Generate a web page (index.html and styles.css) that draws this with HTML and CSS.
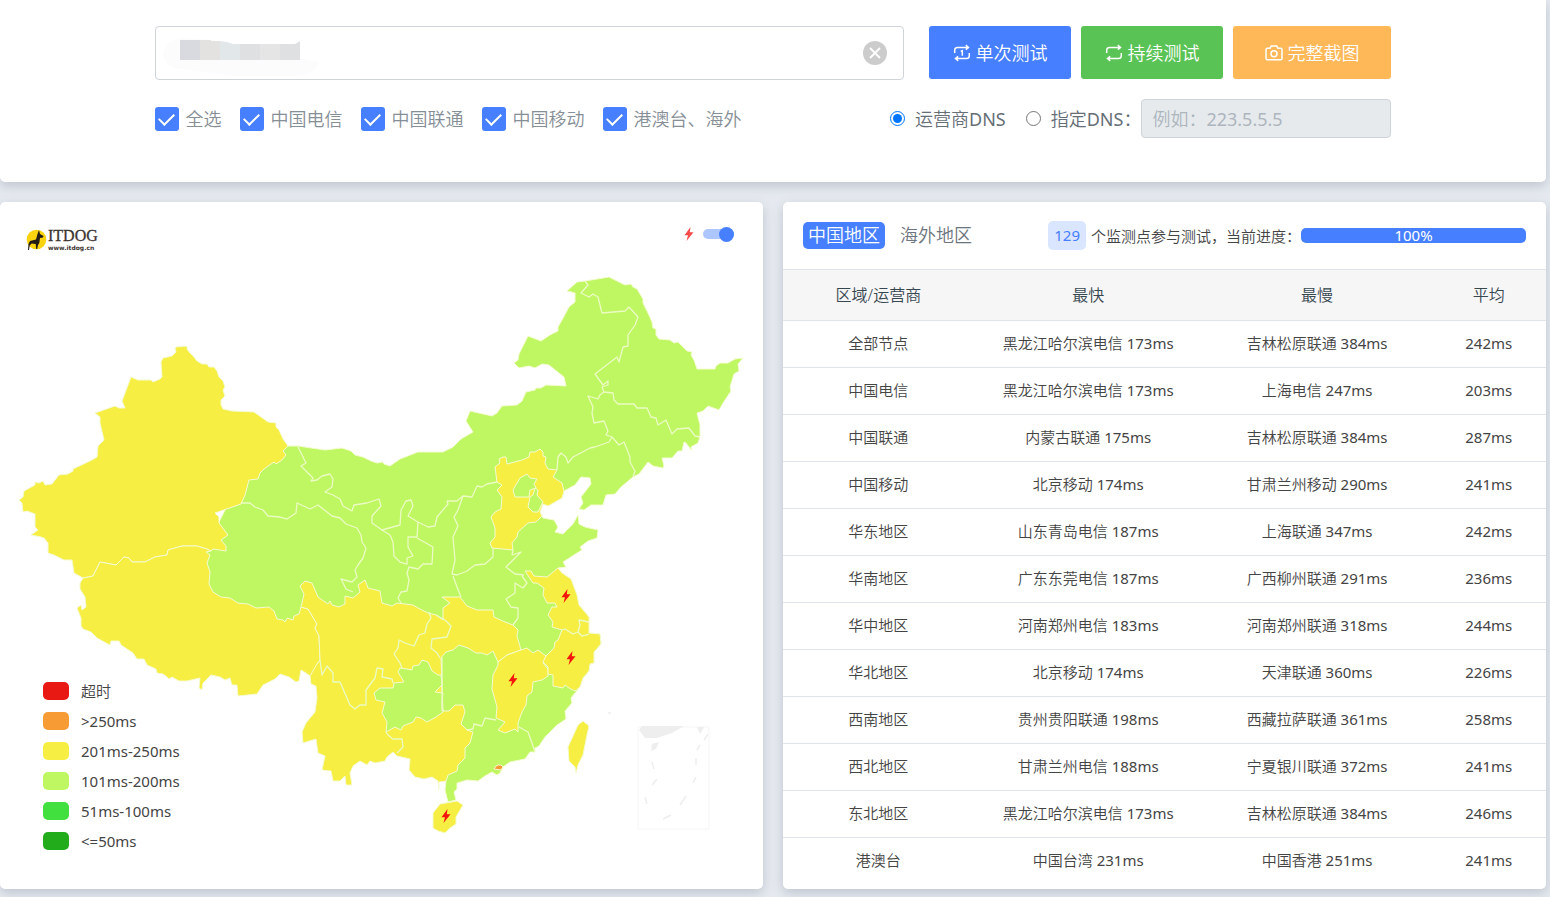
FILE: index.html
```
<!DOCTYPE html>
<html lang="zh-CN">
<head>
<meta charset="utf-8">
<title>ITDOG Ping</title>
<link rel="stylesheet" href="styles.css">
</head>
<body>
<section class="card search">
  <form class="search-row">
    <div class="host">
      <input class="host-input" type="text" aria-label="测试地址">
      <svg class="host-mask" width="160" height="42" viewBox="0 0 160 42" aria-hidden="true">
        <path fill="#fcfcfc" d="M0 20q2-14 20-16l30 2 106 22q-4 12-20 14H70L10 34Q1 30 0 20z"/>
        <path fill="#d8dadf" d="M17 6h20v20H17z"/><path fill="#e3e2e1" d="M37 6h11v1h9v19H37z"/><path fill="#e2e7ea" d="M57 7l7 1 6 2h7v16H57z"/><path fill="#dee0e2" d="M77 10h20v16H77z"/><path fill="#e5e5e5" d="M97 10h20v16H97z"/><path fill="#dee0e2" d="M117 10h15l5-3v19h-20z"/>
      </svg>
      <button class="clear" type="button" aria-label="清除">
        <svg width="24" height="24" viewBox="0 0 24 24"><ellipse cx="12" cy="12" rx="12" ry="12" fill="#ccc"/><path d="M7 7l10 10M17 7L7 17" stroke="#fff" stroke-width="1.8"/></svg>
      </button>
    </div>
    <div class="actions">
      <button class="btn btn-blue" type="button">
        <svg width="18" height="18" viewBox="0 0 18 18" class="ico"><path d="M1.700 9V6.200Q1.700 3.400 4.500 3.400H15M12.800 1.200L15.500 3.400L12.800 5.600M16.300 9v2.800q0 2.800-2.800 2.800H3M5.200 12.400L2.500 14.600L5.200 16.800M7.700 7.400L9.300 6.600V11.800"/></svg>单次测试</button>
      <button class="btn btn-green" type="button">
        <svg width="18" height="18" viewBox="0 0 18 18" class="ico"><path d="M1.700 9V6.200Q1.700 3.400 4.500 3.400H15M12.800 1.200L15.500 3.400L12.800 5.600M16.300 9v2.800q0 2.800-2.800 2.800H3M5.200 12.400L2.500 14.600L5.200 16.800"/></svg>持续测试</button>
      <button class="btn btn-orange" type="button">
        <svg width="18" height="18" viewBox="0 0 18 18" class="ico"><path d="M2.200 4.200H5L6.300 2h5.400L13 4.200h2.800q1.200 0 1.200 1.200v9q0 1.300-1.200 1.300H2.200Q1 15.700 1 14.400v-9Q1 4.200 2.200 4.200z"/><circle cx="9" cy="9.700" r="3"/></svg>完整截图</button>
    </div>
  </form>
  <div class="options">
    <div class="checks">
      <label class="check"><input type="checkbox" checked><span>全选</span></label>
      <label class="check"><input type="checkbox" checked><span>中国电信</span></label>
      <label class="check"><input type="checkbox" checked><span>中国联通</span></label>
      <label class="check"><input type="checkbox" checked><span>中国移动</span></label>
      <label class="check"><input type="checkbox" checked><span>港澳台、海外</span></label>
    </div>
    <div class="dns">
      <label class="radio"><input type="radio" name="dns" checked><span>运营商DNS</span></label>
      <label class="radio"><input type="radio" name="dns"><span>指定DNS：</span></label>
      <input class="dns-input" type="text" placeholder="例如：223.5.5.5" aria-label="指定DNS" disabled>
    </div>
  </div>
</section>

<main class="panels">
  <section class="card map-card">
    <svg class="map" viewBox="0 202 763 687" role="img" aria-label="中国地图">
      <defs><path id="bolt" d="M1.500-7L-4.500 1.200H-1L-2.500 7L4.500-1.800H.8z"/></defs>
      <g class="area">
        <path class="lime" d="M288 446L298 446 325 450 342 448 351 451 355 455 363 457 371 461 377 463 383 462 384 464 390 466 400 459 418 452 443 452 453 447 461 439 473 432 466 421 470 411 492 416 497 413 502 406 517 405 522 401 526 392 535 390 536 388 541 388 546 385 566 386 564 377 549 365 542 364 535 368 529 366 519 368 514 363 518 360 519 354 528 336 541 341 550 335 558 331 558 327 562 320 569 307 575 302 575 293 567 291 577 282 585 281 609 277 625 285 631 284 633 287 637 289 643 299 643 303 648 313 652 322 653 328 656 329 656 335 659 339 670 340 674 343 678 342 687 351 692 352 691 355 694 360 697 369 715 369 716 366 720 363 728 363 735 359 743 358 738 364 739 371 734 374 730 387 731 391 723 403 719 410 708 406 703 411 697 413 700 425 700 437 698 443 691 447 692 451 686 443 684 442 682 451 678 451 672 458 662 458 664 466 663 468 653 466 648 462 639 474 633 477 621 487 615 494 606 495 603 505 591 505 584 510 579 509 583 503 581 497 591 484 590 478 581 477 575 485 564 491 562 498 548 506 543 504 540 512 542 516 543 518 554 520 558 527 555 532 563 534 573 524 578 515 579 524 585 527 598 530 597 538 588 541 580 547 582 550 577 553 563 562 566 567 558 568 562 573 571 579 577 595 579 605 589 617 589 633 600 634 601 644 594 652 594 663 590 664 589 671 583 678 580 687 575 693 571 698 572 703 565 711 566 719 557 725 545 737 539 746 535 748 535 752 530 752 525 759 510 762 503 767 500 773 497 775 492 772 485 776 478 781 467 780 457 783 457 789 454 792 456 800 448 802 445 790 446 781 430 770 330 700 305 660 250 640 200 590 200 560 230 500 270 450z"/>
        <path class="yellow" d="M176 347L187 346 187 349 190 353 194 357 197 361 202 364 207 364 209 367 214 367 217 371 219 377 223 381 225 387 223 390 225 396 221 400 221 405 223 409 232 411 254 412 268 422 276 423 276 427 279 430 283 439 288 446 283 451 286 455 282 460 276 464 274 462 264 469 260 473 258 479 249 480 245 495 241 504 215 513 219 517 219 523 228 535 221 540 226 546 226 551 213 549 211 551 207 549 197 546 182 546 168 550 167 555 155 557 145 562 132 562 129 558 124 557 116 565 100 562 93 576 83 578 74 573 72 560 64 560 54 555 48 553 48 543 44 538 41 537 31 535 38 530 35 527 35 514 27 511 23 512 22 503 19 500 23 497 24 491 35 485 35 482 39 483 43 481 45 485 52 484 59 475 68 474 73 471 73 469 92 460 97 457 98 446 101 443 104 440 100 423 100 417 95 413 115 406 119 408 125 408 122 401 131 377 138 380 151 380 153 382 160 379 162 377 161 362 163 358 172 356 176 352 175 348z"/>
        <path class="yellow" d="M83 578L93 576 100 562 116 565 124 557 129 558 132 562 145 562 155 557 167 555 168 550 182 546 197 546 207 549 211 551 206 552 210 555 207 563 210 572 209 584 213 592 221 597 230 598 238 603 248 604 256 608 269 607 274 611 277 619 283 620 285 622 287 618 293 620 294 616 299 614 301 607 308 609 317 624 315 628 319 636 320 660 317 664 315 673 310 676 306 673 301 670 299 681 296 682 289 677 280 674 275 679 263 685 257 694 238 696 237 685 232 685 230 678 225 680 220 677 211 675 203 683 202 690 199 688 200 678 187 681 179 681 172 677 169 679 167 677 163 674 157 673 156 669 147 665 144 659 137 659 133 653 121 645 119 641 111 641 110 645 97 638 91 632 83 629 81 626 81 618 77 608 81 605 82 610 86 607 85 597 80 589 80 583z"/>
        <path class="yellow" d="M301 607L304 594 300 586 305 581 312 583 318 597 328 604 330 601 332 605 339 607 345 604 345 596 353 598 360 592 358 585 365 580 368 588 380 591 382 603 392 606 397 603 413 605 418 608 428 613 436 615 443 620 443 608 450 603 442 597 460 597 467 606 477 610 493 610 494 617 505 622 513 625 518 630 517 636 521 650 507 655 498 662 493 651 487 655 482 653 476 653 468 648 459 645 453 650 446 652 441 658 442 685 443 711 449 711 455 705 463 705 465 712 461 724 467 730 473 732 470 743 465 748 465 758 458 765 457 771 448 775 446 781 439 782 439 789 438 781 432 777 424 779 415 777 409 770 410 759 397 756 393 752 387 757 385 761 375 763 370 761 367 765 360 761 353 766 350 773 352 785 346 785 345 776 340 781 333 781 331 771 322 770 325 756 318 753 316 739 303 743 302 732 306 723 315 712 317 698 316 686 311 684 310 676 317 664 320 660 319 636 315 628 317 624 308 609z"/>
        <path class="lime" d="M422 660L428 662 432 671 438 675 441 675 442 685 435 692 443 693 442 702 443 712 436 717 427 722 421 718 416 717 413 722 403 726 401 730 395 727 386 732 387 722 382 713 385 702 376 700 374 693 380 688 393 688 394 683 404 682 398 672 400 668 407 669 412 670 413 666 419 665z"/>
        <path class="yellow" d="M498 662L507 655 521 650 527 648 533 653 538 650 546 656 543 663 548 669 548 676 542 680 533 682 532 692 527 696 526 705 522 712 518 723 518 732 515 729 505 733 498 730 505 722 496 718 497 707 492 689 493 675 498 665z"/>
        <path class="yellow" d="M525 571L531 571 534 576 547 577 553 572 558 568 562 573 571 579 577 595 579 605 589 617 589 633 600 634 601 644 594 652 594 663 590 664 589 671 583 678 580 687 575 691 569 688 565 685 563 688 553 686 553 675 548 674 548 667 543 662 546 656 554 648 555 642 558 640 562 630 552 627 553 622 548 615 552 607 557 607 555 603 547 603 543 595 544 588 537 583 533 583z"/>
        <path class="yellow" d="M497 482L495 467 500 463 499 459 503 457 506 457 507 464 522 460 529 457 530 452 535 452 540 449 543 452 543 456 546 457 545 463 548 469 557 470 553 477 562 483 564 491 562 498 548 506 543 504 540 512 542 516 536 522 528 523 518 532 517 537 512 543 513 550 492 548 490 543 495 537 495 528 491 517 495 512 501 509 502 497 497 490 502 485z"/>
        <path class="lime" d="M513 490L517 483 520 478 527 474 530 478 537 479 534 484 536 488 530 490 529 497 515 497z"/>
        <path class="lime" d="M535 488L538 490 537 495 543 502 538 512 533 512 528 507 530 497 533 495z"/>
        <path class="yellow" d="M583 721L589 726 587 735 583 755 578 765 576 773 575 767 569 761 568 747 578 725z"/>
        <path class="yellow" d="M440 804L457 801 463 805 456 817 456 824 450 828 445 833 438 831 433 828 433 813z"/>
        <path class="orange" d="M494 769L496 766 498 765 501 765 503 767 501 770z"/>
      </g>
      <g class="line">
        <path d="M298 447L306 463 301 466 313 478 311 481 317 480 322 476 330 474 333 479 332 487 325 492 333 495 340 499 343 506 352 511 354 505 367 503 379 499 381 506 372 516 372 523 382 530 400 525 401 510 406 501 411 500 413 506 408 516 418 522 428 527 435 526 437 517 448 504 447 501 457 501 463 496 472 497 477 486 482 487 487 484 497 482"/>
        <path d="M418 522L417 537 408 537 408 547 413 556 407 558 407 564 400 562 394 556 393 542 390 535 382 530M417 538L433 547 432 564 423 564 418 569 409 567 407 573 409 580 407 591 401 592 398 598 401 603"/>
        <path d="M463 496L458 510 454 517 458 526 453 537 455 560 452 574 457 575 467 571 475 565 485 564 493 557 493 548M453 576L457 587 461 597M513 550L512 555 521 552 506 567 515 574 524 575M522 576L527 583 523 588 515 583 515 593 506 599 511 607 518 608 518 618 513 625"/>
        <path d="M241 503L250 503 255 507 263 510 268 516 280 517 287 519 296 513 297 503 310 509 318 505 332 516 340 518 346 524 357 528 361 535 362 542 366 548 363 558 358 565 355 570 357 577 352 582 341 579 346 589 353 592"/>
        <path d="M585 281L588 285 581 293 589 297 593 294 598 297 602 313 625 311 629 307 638 317 635 325 628 335 628 346 623 347 619 362 617 357 595 374 603 385 608 381 608 385 602 387 604 392 613 393 614 400 618 404 634 404 637 408 647 408 651 417 656 418 658 425 666 420 672 434 677 429 689 428 695 436 700 437"/>
        <path d="M604 392L600 395 598 399 588 396 593 407 592 413 594 423 604 421 608 431 606 435 612 437 609 442 595 447 590 448 573 457 568 463 566 457 561 453 558 457 557 470M612 437L619 445 624 442 630 457 630 462 635 471 633 477"/>
        <path d="M467 730L473 729 474 724 482 726 485 718 496 720M519 727L528 732 532 743 535 752M442 658L442 711"/>
        <path d="M320 660L322 675 327 666 333 673 333 682 340 682 350 705 355 709 360 705 366 705 366 690 375 678 377 668 383 669 382 677 392 679 393 683M386 732L388 735 393 739 402 739 403 747 397 753"/>
        <path d="M429 612L431 618 427 624 425 633 419 635 414 646 405 643 399 640 398 648 394 654 400 663 402 668M436 615L445 620 451 626 447 637 432 639 431 648 437 653 440 658M562 630L565 629 573 634 578 632 582 636 589 634M578 632L580 625 579 620 589 622"/>
      </g>
      <g class="inset">
        <path d="M638 727H709V829H638z" class="frame"/>
        <path d="M642 726h42l-12 7-15 5h-12l-6-8zM697 727h7l-4 7zM652 744l7-2-3 7-5 2z"/>
        <path d="M708 734l-4 6M700 745l-3 5M696 758v7M696 777l-3 6M686 796l-6 9M671 815l-8 4M645 797l2 7M652 785l5-6M652 762l2 7M608 713h3" class="dash"/>
      </g>
      <g class="bolt"><use href="#bolt" x="566" y="596"/><use href="#bolt" x="571" y="658"/><use href="#bolt" x="513" y="680"/><use href="#bolt" x="446" y="816"/></g>
    </svg>
    <div class="map-head">
      <svg width="76" height="24" viewBox="0 0 76 24" role="img" aria-label="ITDOG">
        <circle cx="10.500" cy="11.500" r="9.800" fill="#f9d30f"/>
        <path fill="#221b16" d="M13 2l1 4 3.500 2-.5 1.500-3 .5-.7 5-1.300 2-.8 4h-1l-.5-5-4-.5-2 2-.7 4.500H2l.5-6L4 13l6-1.500L11.500 6z"/>
        <text x="22" y="13" class="logo-name">ITDOG</text>
        <text x="22" y="22" class="logo-url">www.itdog.cn</text>
      </svg>
      <label class="toggle" aria-label="闪电标记">
        <svg width="14" height="18" viewBox="-7 -9 14 18"><use href="#bolt" fill="#fa4b4b"/></svg>
        <input type="checkbox" role="switch" checked>
      </label>
    </div>
    <ul class="legend">
      <li><i class="sw sw-red"></i>超时</li>
      <li><i class="sw sw-orange"></i>&gt;250ms</li>
      <li><i class="sw sw-yellow"></i>201ms-250ms</li>
      <li><i class="sw sw-lime"></i>101ms-200ms</li>
      <li><i class="sw sw-green"></i>51ms-100ms</li>
      <li><i class="sw sw-dark"></i>&lt;=50ms</li>
    </ul>
  </section>

  <section class="card">
    <header class="result-head">
      <nav class="tabs"><a href="#" class="tab active">中国地区</a><a href="#" class="tab">海外地区</a></nav>
      <div class="status"><span class="count">129</span><span>个监测点参与测试，当前进度：</span><div class="progress">100%</div></div>
    </header>
    <table class="result">
      <thead><tr><th>区域/运营商</th><th>最快</th><th>最慢</th><th>平均</th></tr></thead>
      <tbody>
        <tr><td>全部节点</td><td>黑龙江哈尔滨电信 173ms</td><td>吉林松原联通 384ms</td><td>242ms</td></tr>
        <tr><td>中国电信</td><td>黑龙江哈尔滨电信 173ms</td><td>上海电信 247ms</td><td>203ms</td></tr>
        <tr><td>中国联通</td><td>内蒙古联通 175ms</td><td>吉林松原联通 384ms</td><td>287ms</td></tr>
        <tr><td>中国移动</td><td>北京移动 174ms</td><td>甘肃兰州移动 290ms</td><td>241ms</td></tr>
        <tr><td>华东地区</td><td>山东青岛电信 187ms</td><td>上海联通 347ms</td><td>242ms</td></tr>
        <tr><td>华南地区</td><td>广东东莞电信 187ms</td><td>广西柳州联通 291ms</td><td>236ms</td></tr>
        <tr><td>华中地区</td><td>河南郑州电信 183ms</td><td>河南郑州联通 318ms</td><td>244ms</td></tr>
        <tr><td>华北地区</td><td>北京移动 174ms</td><td>天津联通 360ms</td><td>226ms</td></tr>
        <tr><td>西南地区</td><td>贵州贵阳联通 198ms</td><td>西藏拉萨联通 361ms</td><td>258ms</td></tr>
        <tr><td>西北地区</td><td>甘肃兰州电信 188ms</td><td>宁夏银川联通 372ms</td><td>241ms</td></tr>
        <tr><td>东北地区</td><td>黑龙江哈尔滨电信 173ms</td><td>吉林松原联通 384ms</td><td>246ms</td></tr>
        <tr><td>港澳台</td><td>中国台湾 231ms</td><td>中国香港 251ms</td><td>241ms</td></tr>
      </tbody>
    </table>
  </section>
</main>
</body>
</html>
```
FILE: styles.css
```
* { box-sizing: border-box; }
body {
  margin: 0;
  padding: 0 4px 8px 0;
  background: #e6eaf0;
  color: #444;
  font: 400 15px/24px "Noto Sans", "Noto Sans CJK SC DemiLight", "Noto Sans CJK SC", sans-serif;
}
button, input { font: inherit; }
.card {
  background: #fff;
  border-radius: 5px;
  box-shadow: 0 4px 12px rgba(50, 65, 85, .22);
}
.search {
  padding: 26px 10% 44px;
  border-radius: 0 0 5px 5px;
  font-size: 18px;
  font-weight: 350;
  color: #868e96;
}
.search-row { display: flex; gap: 25px; }
.host { position: relative; flex: 1; }
.host-input {
  width: 100%;
  height: 54px;
  padding: 0 50px 0 16px;
  border: 1px solid #ced4da;
  border-radius: 4px;
}
.host-mask { position: absolute; left: 8px; top: 8px; pointer-events: none; }
.clear {
  position: absolute;
  right: 17px;
  top: 15px;
  height: 24px;
  padding: 0;
  border: 0;
  background: none;
}
.clear svg { display: block; }
.actions { display: flex; gap: 10px; }
.btn {
  display: flex;
  align-items: center;
  gap: 4px;
  height: 53px;
  padding: 0 24px;
  border: 0;
  border-radius: 3px;
  color: #fff;
}
.btn-blue { background: #467fff; }
.btn-green { background: #5ac356; }
.btn-orange { background: #ffb858; padding: 0 32px; }
.ico { fill: none; stroke: #fff; stroke-width: 1.5; }
.options {
  display: flex;
  justify-content: space-between;
  align-items: center;
  margin-top: 19px;
}
.checks, .check, .dns, .radio { display: flex; align-items: center; }
.checks { gap: 18px; }
.check { gap: 7px; }
.check input {
  appearance: none;
  width: 24px;
  height: 24px;
  margin: 0;
  border-radius: 3px;
  background: #467fff;
  display: grid;
  place-items: center;
}
.check input::after {
  content: "";
  width: 7px;
  height: 13px;
  margin-bottom: 3px;
  border: solid #fff;
  border-width: 0 2px 2px 0;
  transform: rotate(45deg);
}
.dns { color: #666e76; font-weight: 400; }
.radio { gap: 10px; margin-right: 20px; }
.radio + .radio { margin-right: 0; }
.radio input { width: 15px; height: 15px; margin: 0; accent-color: #0075ff; }
.dns-input {
  width: 250px;
  height: 39px;
  padding: 0 10px;
  border: 1px solid #ced4da;
  border-radius: 4px;
  background: #e6eaed;
}
.dns-input::placeholder { color: #adb5bd; }

.panels {
  display: grid;
  grid-template-columns: 1fr 1fr;
  gap: 20px;
  margin-top: 20px;
}
.map-card { display: grid; }
.map-card > * { grid-area: 1 / 1; }
.map { display: block; width: 100%; }
.area { stroke: #f5fbd0; stroke-width: 1; stroke-linejoin: round; }
.line { fill: none; stroke: #ecfbc4; stroke-width: 1.3; stroke-linejoin: round; }
.lime { fill: #bef761; }
.yellow { fill: #f6ee43; }
.orange { fill: #f79b34; }
.bolt { fill: #f3140c; }
.inset { fill: #eee; }
.frame { fill: none; stroke: #f5f5f5; stroke-width: 1; }
.dash { fill: none; stroke: #eee; stroke-width: 1.5; }
.map-head {
  display: flex;
  justify-content: space-between;
  align-items: center;
  align-self: start;
  padding: 12px 29px 0 26px;
  height: 52px;
}
.map-head > svg { margin-top: 12px; }
.logo-name { font: 400 16px/16px "Liberation Serif", serif; fill: #3d3430; stroke: #3d3430; stroke-width: .3; }
.logo-url { font: 700 6px/6px "DejaVu Sans", sans-serif; fill: #3d3430; }
.toggle { display: flex; align-items: center; gap: 7px; }
.toggle input {
  appearance: none;
  display: flex;
  align-items: center;
  justify-content: flex-end;
  width: 31px;
  height: 10px;
  margin: 0;
  border-radius: 5px;
  background: #adc6ff;
}
.toggle input::after {
  content: "";
  width: 15px;
  height: 15px;
  border-radius: 50%;
  background: #467fff;
}
.legend {
  align-self: end;
  justify-self: start;
  margin: 0;
  padding: 0 0 33px 43px;
  list-style: none;
}
.legend li { display: flex; align-items: center; gap: 12px; height: 30px; }
.sw { width: 26px; height: 18px; border-radius: 5px; }
.sw-red { background: #e81812; }
.sw-orange { background: #f79b34; }
.sw-yellow { background: #f6ee43; }
.sw-lime { background: #bef761; }
.sw-green { background: #42e03e; }
.sw-dark { background: #22ac1c; }

.result-head {
  display: flex;
  align-items: center;
  justify-content: space-between;
  height: 67px;
  padding: 0 20px;
}
.tabs { display: flex; gap: 10px; }
.tab {
  padding: 0 5px;
  border-radius: 5px;
  color: #6c757d;
  font-size: 18px;
  font-weight: 350;
  line-height: 27px;
  text-decoration: none;
}
.tab.active { background: #467fff; color: #fff; }
.status { display: flex; align-items: center; }
.count {
  margin-right: 5px;
  padding: 0 6px;
  border-radius: 5px;
  background: #dae5ff;
  color: #467fff;
  line-height: 29px;
}
.progress {
  width: 225px;
  height: 15px;
  border-radius: 5px;
  background: #467fff;
  color: #fff;
  line-height: 15px;
  text-align: center;
}
.result { width: 100%; border-collapse: collapse; table-layout: fixed; }
.result th, .result td { padding: 0 0 2px; text-align: center; height: 47px; border-top: 1px solid #dfe5eb; }
.result th { height: 51px; padding: 0; background: #f6f6f7; color: #37474f; font-size: 16px; font-weight: 350; }
.result th:nth-child(1) { width: 25%; }
.result th:nth-child(2), .result th:nth-child(3) { width: 30%; }
```
